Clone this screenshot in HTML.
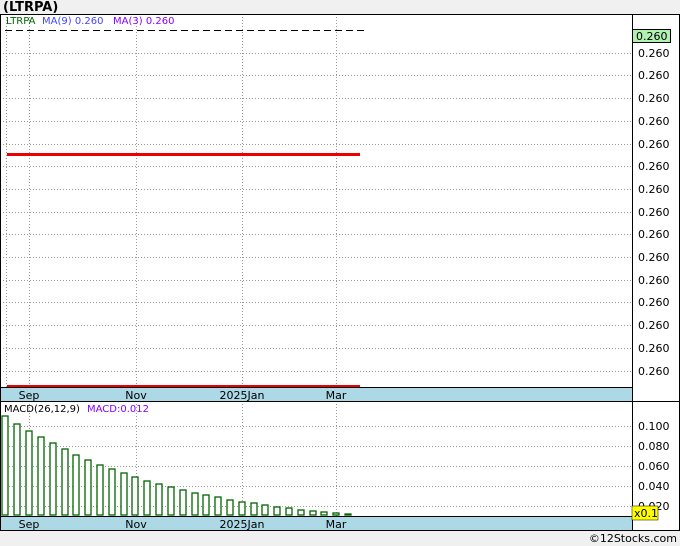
<!DOCTYPE html><html><head><style>body{margin:0;background:#f0f0f0;width:680px;height:546px;overflow:hidden}svg{display:block;font-family:"DejaVu Sans","Liberation Sans",sans-serif}</style></head><body>
<svg width="680" height="546" viewBox="0 0 680 546">
<rect x="0" y="14" width="680" height="517" fill="#fff"/>
<text x="3" y="11" font-size="13" font-weight="bold" fill="#000">(LTRPA)</text>
<g stroke="#999" stroke-dasharray="1,2" stroke-width="1">
<line x1="6.5" y1="14" x2="6.5" y2="387"/><line x1="29.5" y1="14" x2="29.5" y2="387"/><line x1="136.5" y1="14" x2="136.5" y2="387"/><line x1="242.5" y1="14" x2="242.5" y2="387"/><line x1="336.5" y1="14" x2="336.5" y2="387"/>
<line x1="29.5" y1="401" x2="29.5" y2="516"/><line x1="136.5" y1="401" x2="136.5" y2="516"/><line x1="242.5" y1="401" x2="242.5" y2="516"/><line x1="336.5" y1="401" x2="336.5" y2="516"/>
<line x1="0" y1="53.5" x2="632" y2="53.5"/><line x1="0" y1="75.5" x2="632" y2="75.5"/><line x1="0" y1="98.5" x2="632" y2="98.5"/><line x1="0" y1="121.5" x2="632" y2="121.5"/><line x1="0" y1="144.5" x2="632" y2="144.5"/><line x1="0" y1="166.5" x2="632" y2="166.5"/><line x1="0" y1="189.5" x2="632" y2="189.5"/><line x1="0" y1="212.5" x2="632" y2="212.5"/><line x1="0" y1="234.5" x2="632" y2="234.5"/><line x1="0" y1="257.5" x2="632" y2="257.5"/><line x1="0" y1="280.5" x2="632" y2="280.5"/><line x1="0" y1="302.5" x2="632" y2="302.5"/><line x1="0" y1="325.5" x2="632" y2="325.5"/><line x1="0" y1="348.5" x2="632" y2="348.5"/><line x1="0" y1="371.5" x2="632" y2="371.5"/>
<line x1="0" y1="426.5" x2="632" y2="426.5"/><line x1="0" y1="446.5" x2="632" y2="446.5"/><line x1="0" y1="466.5" x2="632" y2="466.5"/><line x1="0" y1="486.5" x2="632" y2="486.5"/><line x1="0" y1="506.5" x2="632" y2="506.5"/>
</g>
<line x1="5" y1="30.5" x2="366" y2="30.5" stroke="#000" stroke-dasharray="7,4"/>
<rect x="7" y="153" width="353" height="3" fill="#e00"/>
<rect x="7" y="385" width="353" height="2" fill="#e00"/>
<rect x="1" y="387" width="631" height="14" fill="#add8e6"/>
<rect x="1" y="516" width="631" height="14" fill="#add8e6"/>
<g stroke="#000" stroke-width="1" fill="none">
<rect x="0.5" y="14.5" width="679" height="516"/>
<line x1="632.5" y1="14" x2="632.5" y2="531"/>
<line x1="0" y1="387.5" x2="632" y2="387.5"/>
<line x1="0" y1="401.5" x2="680" y2="401.5"/>
<line x1="0" y1="516.5" x2="632" y2="516.5"/>
</g>
<g font-size="11" fill="#000" text-anchor="middle">
<text x="29" y="399">Sep</text><text x="136" y="399">Nov</text><text x="242" y="399">2025Jan</text><text x="336" y="399">Mar</text>
<text x="29" y="528">Sep</text><text x="136" y="528">Nov</text><text x="242" y="528">2025Jan</text><text x="336" y="528">Mar</text>
</g>
<text x="6" y="24" font-size="10" fill="#060">LTRPA</text>
<text x="42" y="24" font-size="10" fill="#44f">MA(9)  0.260</text>
<text x="113" y="24" font-size="10" fill="#80f">MA(3)  0.260</text>
<text x="4" y="412" font-size="10" fill="#000">MACD(26,12,9)</text>
<text x="87" y="412" font-size="10" fill="#80f">MACD:0.012</text>
<rect x="632.5" y="29.5" width="38" height="13" fill="#b0f0b0" stroke="#000"/>
<text x="636" y="40" font-size="11" fill="#000">0.260</text>
<g font-size="11" fill="#000">
<text x="638" y="57">0.260</text><text x="638" y="79">0.260</text><text x="638" y="102">0.260</text><text x="638" y="125">0.260</text><text x="638" y="148">0.260</text><text x="638" y="170">0.260</text><text x="638" y="193">0.260</text><text x="638" y="216">0.260</text><text x="638" y="238">0.260</text><text x="638" y="261">0.260</text><text x="638" y="284">0.260</text><text x="638" y="306">0.260</text><text x="638" y="329">0.260</text><text x="638" y="352">0.260</text><text x="638" y="375">0.260</text>
<text x="638" y="430">0.100</text><text x="638" y="450">0.080</text><text x="638" y="470">0.060</text><text x="638" y="490">0.040</text><text x="638" y="510">0.020</text>
</g>
<rect x="632" y="506" width="26" height="14" fill="#ff0" stroke="#000" stroke-width="0.5"/>
<text x="634" y="517" font-size="11" fill="#000">x0.1</text>
<g stroke="#006400" stroke-width="1.3" fill="#fff">
<rect x="2" y="416" width="6" height="99"/><rect x="14" y="424" width="6" height="91"/><rect x="26" y="431" width="6" height="84"/><rect x="38" y="437" width="6" height="78"/><rect x="50" y="443" width="6" height="72"/><rect x="62" y="449" width="6" height="66"/><rect x="73" y="455" width="6" height="60"/><rect x="85" y="460" width="6" height="55"/><rect x="97" y="465" width="6" height="50"/><rect x="109" y="469" width="6" height="46"/><rect x="121" y="473" width="6" height="42"/><rect x="132" y="477" width="6" height="38"/><rect x="144" y="481" width="6" height="34"/><rect x="156" y="484" width="6" height="31"/><rect x="168" y="487" width="6" height="28"/><rect x="180" y="490" width="6" height="25"/><rect x="192" y="493" width="6" height="22"/><rect x="203" y="495" width="6" height="20"/><rect x="215" y="497" width="6" height="18"/><rect x="227" y="500" width="6" height="15"/><rect x="239" y="502" width="6" height="13"/><rect x="251" y="503" width="6" height="12"/><rect x="262" y="505" width="6" height="10"/><rect x="274" y="507" width="6" height="8"/><rect x="286" y="508" width="6" height="7"/><rect x="298" y="510" width="6" height="5"/><rect x="310" y="511" width="6" height="4"/><rect x="321" y="512" width="6" height="3"/><rect x="333" y="513" width="6" height="2"/><rect x="345" y="514" width="6" height="1"/>
</g>
<text x="677" y="542" font-size="11" fill="#000" text-anchor="end">©12Stocks.com</text>
</svg>
</body></html>
